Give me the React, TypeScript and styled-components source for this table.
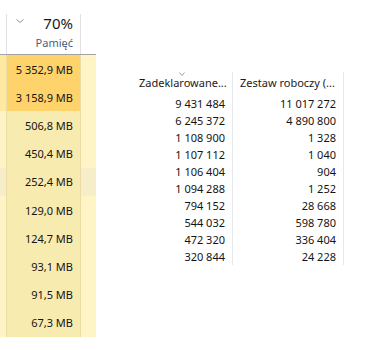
import styled, { createGlobalStyle } from "styled-components";

const memory = [
  { value: "5 352,9 MB", hot: true, marked: false },
  { value: "3 158,9 MB", hot: true, marked: false },
  { value: "506,8 MB", hot: false, marked: false },
  { value: "450,4 MB", hot: false, marked: false },
  { value: "252,4 MB", hot: false, marked: true },
  { value: "129,0 MB", hot: false, marked: false },
  { value: "124,7 MB", hot: false, marked: false },
  { value: "93,1 MB", hot: false, marked: false },
  { value: "91,5 MB", hot: false, marked: false },
  { value: "67,3 MB", hot: false, marked: false },
];

// zadeklarowane / zestaw roboczy
const details = [
  ["9 431 484", "11 017 272"],
  ["6 245 372", "4 890 800"],
  ["1 108 900", "1 328"],
  ["1 107 112", "1 040"],
  ["1 106 404", "904"],
  ["1 094 288", "1 252"],
  ["794 152", "28 668"],
  ["544 032", "598 780"],
  ["472 320", "336 404"],
  ["320 844", "24 228"],
];

const Chevron = ({ w, h, color }: { w: number; h: number; color: string }) => (
  <svg width={w} height={h} viewBox={`0 0 ${w} ${h}`} style={{ display: "block" }}>
    <polyline
      points={`0.5,0.5 ${w / 2},${h - 0.5} ${w - 0.5},0.5`}
      fill="none"
      stroke={color}
      strokeWidth="1"
    />
  </svg>
);

const App = () => {
  return (
    <Page>
      <GlobalStyle />
      <MemoryPanel>
        <PanelHeader>
          <HeaderGap />
          <HeaderCell>
            <HeaderTop>
              <ChevronBox>
                <Chevron w={8} h={4} color="#8A93A5" />
              </ChevronBox>
              <Percent>70%</Percent>
            </HeaderTop>
            <HeaderLabel>Pamięć</HeaderLabel>
          </HeaderCell>
          <HeaderGap />
        </PanelHeader>
        <MemoryRows>
          {memory.map((row) => (
            <MemoryRow key={row.value}>
              <Strip $tone={row.hot ? "#FFE8A0" : row.marked ? "#F6EEC8" : "#FFF4C6"} />
              <MemoryCell $hot={row.hot}>{row.value}</MemoryCell>
              <Strip $tone={row.marked ? "#F6EEC8" : "#FFF4C6"} />
            </MemoryRow>
          ))}
        </MemoryRows>
      </MemoryPanel>

      <DetailsTable>
        <TableHead>
          <HeadCell $width={101}>
            <SortMark>
              <Chevron w={6} h={4} color="#A0A0A0" />
            </SortMark>
            <HeadLabel>Zadeklarowane...</HeadLabel>
          </HeadCell>
          <HeadCell $width={111}>
            <SortMark />
            <HeadLabel>Zestaw roboczy (...</HeadLabel>
          </HeadCell>
        </TableHead>
        {details.map(([committed, working], i) => (
          <TableRow key={i}>
            <NumberCell $width={101}>{committed}</NumberCell>
            <NumberCell $width={111}>{working}</NumberCell>
          </TableRow>
        ))}
      </DetailsTable>
    </Page>
  );
};

export default App;

const GlobalStyle = createGlobalStyle`
  html, body {
    margin: 0;
    padding: 0;
    background: #ffffff;
  }
  body {
    font-family: "Noto Sans", "Open Sans", sans-serif;
    color: #1a1a1a;
  }
`;

const Page = styled.div`
  display: flex;
  align-items: flex-start;
  width: 381px;
  height: 350px;
  overflow: hidden;
`;

const MemoryPanel = styled.div`
  width: 96px;
  display: flex;
  flex-direction: column;
`;

const PanelHeader = styled.div`
  display: grid;
  grid-template-columns: 6px 75px 15px;
  height: 55px;
  padding-top: 14px;
  box-sizing: border-box;
  border-bottom: 1px solid #a3a3a3;
`;

const HeaderGap = styled.div``;

const HeaderCell = styled.div`
  display: flex;
  flex-direction: column;
  align-items: stretch;
  border-left: 1px solid #e1e1e1;
  border-right: 1px solid #e1e1e1;
  padding: 0 7px 0 9px;
`;

const HeaderTop = styled.div`
  display: flex;
  justify-content: space-between;
  align-items: flex-start;
`;

const ChevronBox = styled.div`
  margin-top: 5px;
`;

const Percent = styled.div`
  font-size: 15px;
  line-height: 18px;
  color: #1a1a1a;
`;

const HeaderLabel = styled.div`
  margin-top: 4px;
  font-size: 11px;
  line-height: 14px;
  text-align: right;
  color: #4c6080;
`;

const MemoryRows = styled.div`
  display: grid;
  grid-auto-rows: 28.2px;
`;

const MemoryRow = styled.div`
  display: grid;
  grid-template-columns: 6px 75px 15px;
`;

const Strip = styled.div<{ $tone: string }>`
  background: ${(p) => p.$tone};
`;

const MemoryCell = styled.div<{ $hot: boolean }>`
  display: flex;
  align-items: center;
  justify-content: flex-end;
  padding-right: 7px;
  background: ${(p) => (p.$hot ? "#FFD36C" : "#F8EBB0")};
  border-left: 1px solid #eadca4;
  border-right: 1px solid #eadca4;
  font-size: 11px;
  white-space: nowrap;
  color: #141414;
`;

const DetailsTable = styled.div`
  margin-top: 72px;
  margin-left: 36px;
  display: flex;
  flex-direction: column;
`;

const TableHead = styled.div`
  display: flex;
  height: 23px;
`;

const HeadCell = styled.div<{ $width: number }>`
  width: ${(p) => p.$width}px;
  box-sizing: border-box;
  border-right: 1px solid #e5e8ec;
  display: flex;
  flex-direction: column;
  align-items: stretch;
`;

const SortMark = styled.div`
  height: 4px;
  display: flex;
  justify-content: center;
`;

const HeadLabel = styled.div`
  padding-left: 7px;
  font-size: 11px;
  line-height: 14px;
  white-space: nowrap;
  color: #1a1a1a;
`;

const TableRow = styled.div`
  display: flex;
  height: 17px;
`;

const NumberCell = styled.div<{ $width: number }>`
  width: ${(p) => p.$width}px;
  box-sizing: border-box;
  border-right: 1px solid #e5e8ec;
  padding-right: 7px;
  text-align: right;
  font-size: 11px;
  line-height: 17px;
  white-space: nowrap;
  color: #141414;
`;
